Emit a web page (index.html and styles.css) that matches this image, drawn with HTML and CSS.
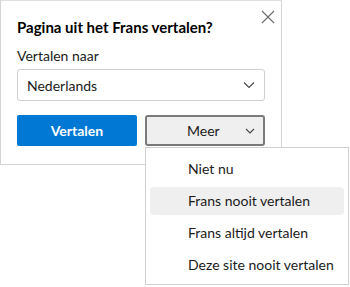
FILE: index.html
```html
<!DOCTYPE html>
<html lang="nl">
<head>
  <meta charset="UTF-8">
  <title>Vertalen</title>
  <link rel="stylesheet" href="styles.css">
</head>
<body>
  <div class="panel">
    <div class="header">
      <h1>Pagina uit het Frans vertalen?</h1>
      <button class="close" aria-label="Sluiten">
        <svg width="14" height="14" viewBox="0 0 14 14"><path d="M1 1 L13 13 M13 1 L1 13" stroke="#6b6b6b" stroke-width="1.1" fill="none"/></svg>
      </button>
    </div>

    <label class="label">Vertalen naar</label>
    <div class="select">
      <span>Nederlands</span>
      <svg width="12" height="8" viewBox="0 0 12 8"><path d="M1 1.5 L6 6.5 L11 1.5" stroke="#444" stroke-width="1.1" fill="none"/></svg>
    </div>

    <div class="actions">
      <button class="primary">Vertalen</button>
      <div class="more-wrap">
        <button class="more">
          <span>Meer</span>
          <svg width="10" height="6" viewBox="0 0 10 6"><path d="M1 1 L5 5 L9 1" stroke="#444" stroke-width="1.1" fill="none"/></svg>
        </button>
        <!-- menu ligt over het paneel heen -->
        <ul class="menu">
          <li>Niet nu</li>
          <li class="hover">Frans nooit vertalen</li>
          <li>Frans altijd vertalen</li>
          <li>Deze site nooit vertalen</li>
        </ul>
      </div>
    </div>
  </div>
</body>
</html>
```

FILE: styles.css
```css
html, body {
  height: 287px;
}

body {
  margin: 0;
  background: #fff;
  font-family: 'Lato', sans-serif;
  color: #1b1b1b;
}

.panel {
  width: 248px;
  height: 131px;
  padding: 16px;
  border: 1px solid #d4d4d4;
  border-top-color: #e0e0e0;
  background: #fff;
}

.header {
  display: flex;
  justify-content: space-between;
  align-items: flex-start;
}

h1 {
  margin: 0;
  font-size: 15px;
  line-height: 20px;
  font-weight: bold;
  color: #000;
}

.close {
  border: none;
  background: none;
  padding: 0;
  margin: -7px -10px 0 0;
  width: 14px;
  height: 14px;
}

.label {
  display: block;
  margin-top: 10px;
  font-size: 14px;
  line-height: 18px;
}

.select {
  margin-top: 4px;
  height: 30px;
  border: 1px solid #cfcfcf;
  border-radius: 3px;
  display: flex;
  align-items: center;
  justify-content: space-between;
  padding: 0 9px;
  font-size: 14px;
}

.actions {
  display: flex;
  gap: 8px;
  margin-top: 14px;
}

.primary {
  width: 120px;
  height: 31px;
  background: #0078d4;
  color: #fff;
  border: none;
  border-radius: 2px;
  font-family: inherit;
  font-size: 14px;
  font-weight: bold;
}

.more-wrap {
  position: relative;
}

.more {
  width: 120px;
  height: 31px;
  background: #efefef;
  border: 2px solid #7a7a7a;
  border-radius: 3px;
  font-family: inherit;
  font-size: 14px;
  color: #1b1b1b;
  display: flex;
  align-items: center;
  justify-content: space-between;
  padding: 0 8px 0 40px;
}

.menu {
  position: absolute;
  top: 32px;
  left: 0;
  z-index: 2;
  width: 194px;
  margin: 0;
  padding: 7px 4px 5px;
  list-style: none;
  background: #fff;
  border: 1px solid #cfcfcf;
}

.menu li {
  height: 28px;
  line-height: 28px;
  padding-left: 38px;
  font-size: 14px;
  border-radius: 4px;
  margin-bottom: 4px;
}

.menu li:last-child {
  margin-bottom: 0;
}

.menu li.hover {
  background: #efefef;
}
```
